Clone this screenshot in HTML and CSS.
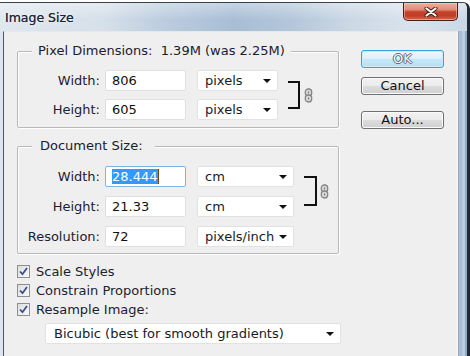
FILE: index.html
```html
<!DOCTYPE html>
<html>
<head>
<meta charset="utf-8">
<link rel="stylesheet" href="styles.css">
</head>
<body>
<div class="window">
  <div class="titlebar">
    <span class="title">Image Size</span>
    <div class="close">
      <svg width="14" height="10" viewBox="0 0 14 10"><path d="M2.5 1.5 L11.5 8.5 M11.5 1.5 L2.5 8.5" stroke="#3a1f1a" stroke-width="4" stroke-linecap="round"/><path d="M2.5 1.5 L11.5 8.5 M11.5 1.5 L2.5 8.5" stroke="#ffffff" stroke-width="2.2" stroke-linecap="round"/></svg>
    </div>
  </div>
  <div class="frame">
    <div class="lframe"></div>
    <div class="client">
      <div class="left">
        <div class="group g1">
          <div class="legend">Pixel Dimensions:&nbsp; 1.39M (was 2.25M)</div>
          <div class="grid">
            <span class="lbl">Width:</span>
            <div class="inp">806</div>
            <div class="sel"><span>pixels</span><i class="arrow"></i></div>
            <div class="bracket"></div>
            <div class="chain"><svg width="9" height="15" viewBox="0 0 9 15"><rect x="1.3" y="1" width="6.4" height="7" rx="3" fill="#d6d6d6" stroke="#858585" stroke-width="1.3"/><rect x="1.3" y="7" width="6.4" height="7" rx="3" fill="#d6d6d6" stroke="#858585" stroke-width="1.3"/><path d="M4.5 3.6 V5.6 M4.5 9.4 V11.4" stroke="#777" stroke-width="1.1"/></svg></div>
            <span class="lbl">Height:</span>
            <div class="inp">605</div>
            <div class="sel"><span>pixels</span><i class="arrow"></i></div>
          </div>
        </div>
        <div class="group g2">
          <div class="legend">Document Size:</div>
          <div class="grid">
            <span class="lbl">Width:</span>
            <div class="inp focus"><span class="hl">28.444</span><span class="caret"></span></div>
            <div class="sel"><span>cm</span><i class="arrow"></i></div>
            <div class="bracket"></div>
            <div class="chain"><svg width="9" height="15" viewBox="0 0 9 15"><rect x="1.3" y="1" width="6.4" height="7" rx="3" fill="#d6d6d6" stroke="#858585" stroke-width="1.3"/><rect x="1.3" y="7" width="6.4" height="7" rx="3" fill="#d6d6d6" stroke="#858585" stroke-width="1.3"/><path d="M4.5 3.6 V5.6 M4.5 9.4 V11.4" stroke="#777" stroke-width="1.1"/></svg></div>
            <span class="lbl">Height:</span>
            <div class="inp">21.33</div>
            <div class="sel"><span>cm</span><i class="arrow"></i></div>
            <span class="lbl">Resolution:</span>
            <div class="inp">72</div>
            <div class="sel"><span>pixels/inch</span><i class="arrow"></i></div>
          </div>
        </div>
        <div class="checks">
          <div class="chk"><span class="box"><svg width="11" height="11" viewBox="0 0 11 11"><path d="M2 5.5 L4.5 8.2 L9 2" fill="none" stroke="#3b4f8e" stroke-width="1.8"/></svg></span><span>Scale Styles</span></div>
          <div class="chk"><span class="box"><svg width="11" height="11" viewBox="0 0 11 11"><path d="M2 5.5 L4.5 8.2 L9 2" fill="none" stroke="#3b4f8e" stroke-width="1.8"/></svg></span><span>Constrain Proportions</span></div>
          <div class="chk"><span class="box"><svg width="11" height="11" viewBox="0 0 11 11"><path d="M2 5.5 L4.5 8.2 L9 2" fill="none" stroke="#3b4f8e" stroke-width="1.8"/></svg></span><span>Resample Image:</span></div>
        </div>
        <div class="sel wide"><span>Bicubic (best for smooth gradients)</span><i class="arrow"></i></div>
      </div>
      <div class="buttons">
        <div class="btn ok">OK</div>
        <div class="btn">Cancel</div>
        <div class="btn auto">Auto...</div>
      </div>
    </div>
    <div class="rframe"></div>
  </div>
</div>
</body>
</html>
```

FILE: styles.css
```css
* { box-sizing: border-box; }
html, body { margin: 0; height: 100%; }
body {
  background: #ffffff;
  padding-top: 2px;
  overflow: hidden;
  font-family: "DejaVu Sans", Verdana, sans-serif;
  font-size: 13px;
  color: #1c2230;
}
.window {
  width: 470px;
  height: 354px;
  display: flex;
  flex-direction: column;
  border-top: 1px solid #38424e;
  border-right: 3px solid #1f2935;
  border-top-right-radius: 7px;
  overflow: hidden;
}
.titlebar {
  height: 28px;
  flex: none;
  display: flex;
  align-items: flex-start;
  background:
    linear-gradient(180deg, rgba(255,255,255,0.35), rgba(255,255,255,0) 60%),
    linear-gradient(90deg, #dfe7ef 0%, #d6e0ea 22%, #bccddf 35%, #a8bed5 50%, #b3c6da 62%, #cbd8e5 75%, #d9e3ec 88%, #cad8e6 100%);
}
.title {
  padding: 7px 0 0 5px;
  font-size: 12.5px;
  line-height: 15px;
  color: #1b2736;
  text-shadow: 0 0 5px rgba(255,255,255,0.9), 0 0 0.5px #1b2736;
}
.close {
  margin-left: auto;
  margin-right: 9px;
  width: 55px;
  height: 18px;
  border: 1px solid #4a1e16;
  border-top: none;
  border-radius: 0 0 5px 5px;
  background: linear-gradient(180deg, #eab1a3 0%, #df8a74 40%, #c4432b 52%, #c13d25 75%, #d7694f 100%);
  box-shadow: inset 0 0 0 1px rgba(255,210,200,0.5);
  display: flex;
  align-items: center;
  justify-content: center;
}
.frame {
  flex: 1;
  display: flex;
}
.lframe {
  width: 3px;
  background: #dde6ee;
}
.client {
  width: 455px;
  flex: none;
  background: #efefef;
  border-left: 1px solid #4e5862;
  border-top: 1px solid #e4e9ee;
  border-right: 1px solid #f7f7f7;
  display: flex;
}
.rframe {
  flex: 1;
  background: linear-gradient(90deg, #8ea7c2 0, #8ea7c2 1px, #a9bed4 1px, #a9bed4 4px, #bccce0 4px, #bccce0 7px, #93abc6 7px);
}
.left {
  width: 335px;
  flex: none;
  padding: 19px 0 0 13px;
  display: flex;
  flex-direction: column;
}
.group {
  width: 322px;
  border: 1px solid #b9b9b9;
  border-radius: 2px;
  box-shadow: inset 1px 1px 0 #ffffff, 1px 1px 0 #ffffff;
  display: flex;
  flex-direction: column;
}
.g1 { padding-bottom: 7px; }
.g2 { margin-top: 18px; padding-bottom: 6px; }
.legend {
  align-self: flex-start;
  margin: -9px 0 0 14px;
  padding: 0 6px;
  line-height: 16px;
  background: #efefef;
  color: #1a2030;
}
.g2 .legend { padding: 0 12px 0 8px; }
.grid {
  display: grid;
  grid-template-columns: 82px auto auto auto auto;
  justify-content: start;
  row-gap: 8px;
  align-items: center;
  justify-items: start;
  margin-top: 11px;
}
.g2 .grid { row-gap: 9px; margin-top: 12px; }
.lbl { justify-self: end; line-height: 16px; }
.inp {
  margin-left: 5px;
  width: 81px;
  height: 21px;
  background: #ffffff;
  border: 1px solid #dfe0e4;
  border-radius: 2px;
  padding-left: 6px;
  line-height: 19px;
  display: flex;
  align-items: center;
  color: #111;
}
.inp.focus { border-color: #84b3e0; }
.hl {
  background: #3399ff;
  color: #ffffff;
  line-height: 15px;
}
.caret {
  width: 1px;
  height: 15px;
  background: #6b4a1e;
}
.sel {
  margin-left: 11px;
  width: 81px;
  height: 21px;
  background: #ffffff;
  border: 1px solid #e2e2e2;
  border-radius: 2px;
  padding: 0 6px 0 7px;
  display: flex;
  align-items: center;
  justify-content: space-between;
  color: #151a28;
}
.g2 .sel { width: 97px; }
.arrow {
  width: 0;
  height: 0;
  border-left: 4px solid transparent;
  border-right: 4px solid transparent;
  border-top: 4px solid #111;
}
.bracket {
  grid-column: 4;
  grid-row: 1 / span 2;
  align-self: stretch;
  margin: 11px 0 11px 10px;
  width: 12px;
  border: 2px solid #111;
  border-left: none;
}
.g2 .bracket { margin: 10px 0 11px 10px; width: 13px; }
.chain {
  grid-column: 5;
  grid-row: 1 / span 2;
  margin-left: 4px;
  display: flex;
}
.g2 .chain { margin-left: 3px; }
.checks {
  margin-top: 8px;
  display: flex;
  flex-direction: column;
}
.chk {
  height: 19px;
  display: flex;
  align-items: center;
  gap: 6px;
}
.box {
  width: 13px;
  height: 13px;
  border: 1px solid #8e8f8f;
  background: linear-gradient(135deg, #dedede, #f8f8f8);
  display: flex;
  align-items: center;
  justify-content: center;
}
.sel.wide {
  margin: 4px 0 0 28px;
  width: 296px;
  padding-left: 8px;
}
.buttons {
  margin-left: 22px;
  padding-top: 18px;
  display: flex;
  flex-direction: column;
}
.btn {
  width: 83px;
  height: 18px;
  border: 1px solid #707070;
  border-radius: 3px;
  background: linear-gradient(180deg, #f2f2f2 0%, #ebebeb 50%, #dddddd 51%, #cfcfcf 100%);
  box-shadow: inset 0 0 0 1px #fbfbfb;
  display: flex;
  align-items: center;
  justify-content: center;
  line-height: 16px;
  color: #111;
  margin-bottom: 9px;
}
.btn.ok {
  border-color: #3aa0e6;
  background: linear-gradient(180deg, #eef8fe 0%, #daf0fc 50%, #c6e7fa 51%, #b6dff7 100%);
  box-shadow: inset 0 0 0 1px #c8ecfd;
  color: #f7f9fb;
  text-shadow: 1px 0 #6a6a6a, -1px 0 #6a6a6a, 0 1px #6a6a6a, 0 -1px #6a6a6a;
}
.btn.auto { margin-top: 7px; }
```
